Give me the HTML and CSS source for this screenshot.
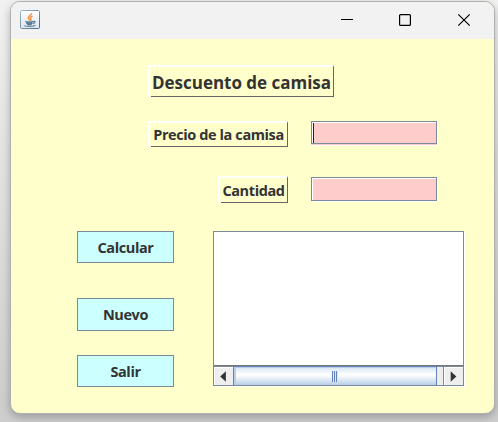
FILE: index.html
```
<!DOCTYPE html>
<html lang="es">
<head>
<meta charset="utf-8">
<title>Descuento de camisa</title>
<link rel="stylesheet" href="styles.css">
</head>
<body>
<div class="window">
  <header class="titlebar">
    <svg class="java" width="20" height="20" viewBox="0 0 20 20">
      <defs><linearGradient id="tile" x1="0" y1="0" x2="0" y2="1"><stop offset="0" stop-color="#fff"/><stop offset="1" stop-color="#dfe5ea"/></linearGradient>
      <linearGradient id="edge" x1="0" y1="0" x2="1" y2="1"><stop offset="0" stop-color="#9fb8ca"/><stop offset="1" stop-color="#496e8a"/></linearGradient></defs>
      <rect x=".5" y=".5" width="19" height="18" rx="1.2" fill="url(#tile)" stroke="url(#edge)"/>
      <path d="M11.500 3.200c.4 2-3.600 2.800-3.200 4.800.1 1 1.200 1.700 1.400 2.500M12.500 6.200c-2.400.9-2.900 1.900-1.700 2.900.6.7.1 1.300-.4 1.600" fill="none" stroke="#f0944d" stroke-width="1.500"/>
      <path d="M5.300 11.400c2 .8 6.500.8 8 0M6 12.900c1.700.8 5 .8 6.500 0M7 14.400c1.300.5 3.500.5 4.800 0M13.300 11.500c2.300-.8 2.300 1.300-.3 2.200" fill="none" stroke="#587d99" stroke-width="1.300"/>
      <path d="M4 15.600c2 1.300 9 1.200 11.500-.3" fill="none" stroke="#6c8da5" stroke-width="1.100"/>
    </svg>
    <svg class="controls" width="130" height="14" viewBox="0 0 130 14">
      <path d="M0 7.500h12" stroke="#000"/>
      <rect x="58.600" y="2.600" width="10.800" height="10.800" rx="1" fill="none" stroke="#000" stroke-width="1.200"/>
      <path d="M117.300 2.300l11.400 11.400M128.700 2.300L117.300 13.700" stroke="#000" stroke-width="1.200"/>
    </svg>
  </header>
  <main class="content">
    <div class="label heading"><span>Descuento de camisa</span></div>
    <div class="row price">
      <div class="label"><span>Precio de la camisa</span></div>
      <div class="field focused"></div>
    </div>
    <div class="row amount">
      <div class="label"><span>Cantidad</span></div>
      <div class="field"></div>
    </div>
    <div class="lower">
      <div class="buttons">
        <button class="calc"><span>Calcular</span></button>
        <button class="new"><span>Nuevo</span></button>
        <button class="exit"><span>Salir</span></button>
      </div>
      <div class="pane">
        <div class="output"></div>
        <div class="scroll">
          <svg class="arrow" width="19" height="18" viewBox="0 0 19 18"><path d="M11.500 3.500v11L5.500 9z" fill="#333"/></svg>
          <div class="thumb"><i></i><i></i><i></i></div>
          <div class="track"></div>
          <svg class="arrow next" width="19" height="18" viewBox="0 0 19 18"><path d="M6 3.500v11L12 9z" fill="#333"/></svg>
        </div>
      </div>
    </div>
  </main>
</div>
</body>
</html>
```
FILE: styles.css
```
* { box-sizing: border-box; }
html, body { width: 498px; height: 422px; overflow: hidden; }
body {
  margin: 0;
  padding: 1px 0 0 10px;
  background: linear-gradient(#f2f2f2, #e2e2e2 40%, #cdcdcd);
  font-family: "Open Sans", "Noto Sans", sans-serif;
  font-weight: 700;
  font-size: 14.5px;
  letter-spacing: -.4px;
  color: #333;
}
.window {
  width: 485px;
  height: 413px;
  border: 1px solid #b0b0b0;
  border-radius: 10px;
  overflow: hidden;
  background: #ffffcc;
  box-shadow: 0 3px 9px rgba(0, 0, 0, .26);
}
.titlebar {
  height: 37px;
  padding: 8px 23px 0 9px;
  display: flex;
  justify-content: space-between;
  background: #f2f2f2;
}
.controls { margin-top: 2px; overflow: visible; }
.content { padding: 26px 0 0 66px; }
.label {
  position: relative;
  display: flex;
  justify-content: center;
  align-items: center;
  height: 26px;
  border: 2px solid #fff;
  border-right: 1px solid #666;
  border-bottom: 1px solid #666;
  white-space: nowrap;
}
.label::after {
  content: "";
  position: absolute;
  left: -2px;
  bottom: -1px;
  width: 3px;
  height: 1px;
  background: #fff;
}
.label span, button span { display: block; flex: none; }
.heading { width: 186px; height: 32px; margin-left: 71px; padding-top: 2px; font-size: 17px; letter-spacing: -.02px; }
.row { display: flex; width: 360px; justify-content: flex-end; }
.row .label { margin-right: 23px; }
.price { margin-top: 24px; }
.price .label { width: 140px; }
.amount { margin-top: 30px; }
.amount .label { width: 70px; height: 27px; margin-top: -1px; }
.field {
  width: 126px;
  height: 24px;
  border: 1px solid #7a8a99;
  background: #ffcccc;
  box-shadow: inset 1px 1px #fff, 1px 1px #fff;
}
.price .field { height: 23px; box-shadow: inset 1px 1px #fff, 0 1px #ffcccc, 1px 2px #fff; }
.focused::before { content: ""; display: block; width: 1px; height: 20px; margin: 1px 0 0 1px; background: #222; }
.lower { display: flex; margin-top: 28px; gap: 39px; }
.buttons { width: 97px; }
button {
  display: flex;
  align-items: center;
  justify-content: center;
  width: 97px;
  height: 32px;
  padding: 0;
  border: 1px solid #7a8a99;
  border-radius: 0;
  background: #ccffff;
  color: #333;
  font: inherit;
  letter-spacing: inherit;
}
.new { height: 33px; margin-top: 35px; }
.exit { margin-top: 24px; }
.pane {
  width: 251px;
  height: 155px;
  border: 1px solid #7a8a99;
  background: #fff;
  box-shadow: 1px 1px #fff;
}
.output { height: 134px; border-bottom: 1px solid #777; }
.scroll { display: flex; height: 19px; border-top: 1px solid #7a8a99; background: #eee; }
.arrow { flex: none; border-top: 1px solid #fff; border-left: 1px solid #fff; }
.thumb {
  width: 204px;
  display: flex;
  justify-content: center;
  align-items: center;
  gap: 0;
  margin-top: -1px;
  border: 1px solid #6382bf;
  border-bottom: 0;
  box-shadow: inset 2px 1px #b8cfe5;
  background: linear-gradient(#d5e4f1, #fff 42%, #f8fbfd 50%, #b8cfe5);
}
.thumb i { width: 2px; height: 11px; background: #6382bf; border-right: 1px solid #dce7f3; }
.track { flex: 1; border-right: 1px solid #7a8a99; }
```
